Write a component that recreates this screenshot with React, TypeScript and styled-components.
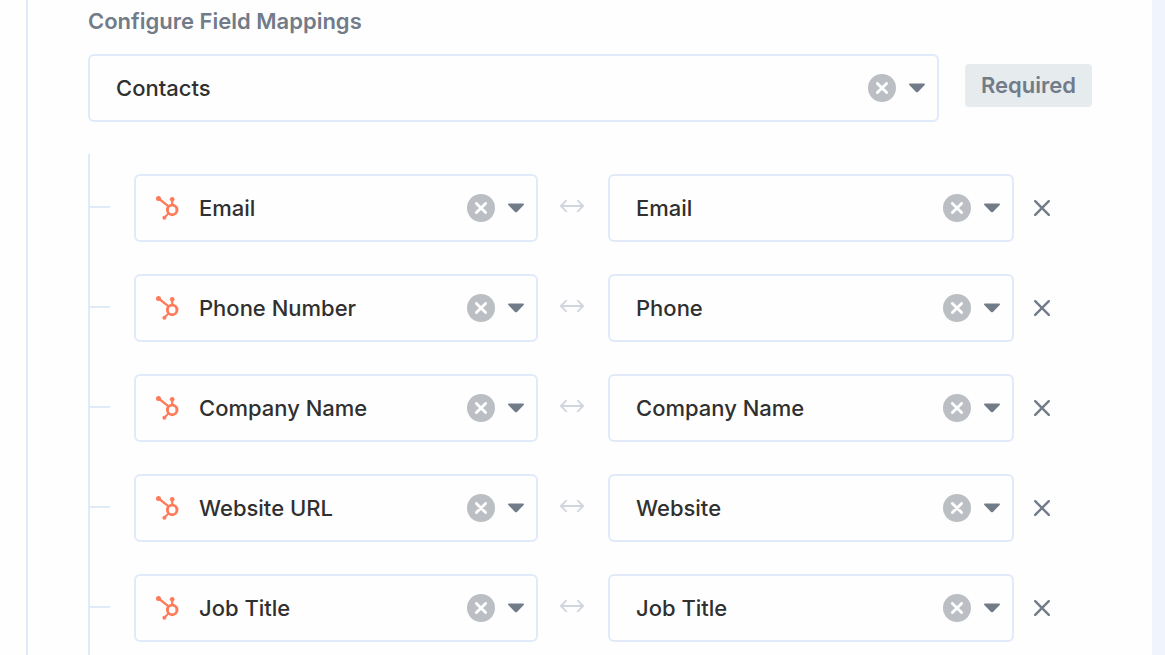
import React, { useState } from "react";
import styled, { createGlobalStyle } from "styled-components";

const line = "#e0eaf9";
const slate = "#727b88";

const GlobalStyle = createGlobalStyle`
  *, *::before, *::after { box-sizing: border-box; }
  body {
    margin: 0;
    background: #f0f4fd;
    color: #303030;
    font-family: Inter, "Liberation Sans", sans-serif;
    font-size: 22px;
    line-height: 28px;
  }
`;

const Page = styled.main`
  display: flex;
  min-height: 100vh;
  margin-right: 13px;
  padding-left: 26px;
  background: #fefefe;
`;

const Section = styled.section`
  display: flex;
  flex: 1;
  flex-direction: column;
  min-width: 0;
  padding: 8px 60px 0;
  border-left: 2px solid ${line};
`;

const Title = styled.h2`
  margin: 0 0 20px;
  color: ${slate};
  font-size: 22px;
  font-weight: 600;
  line-height: 26px;
`;

const ObjectRow = styled.div`
  display: flex;
  align-items: flex-start;
  gap: 26px;
  margin-bottom: 32px;
`;

const Badge = styled.span`
  margin-top: 10px;
  padding: 8px 16px;
  border-radius: 4px;
  background: #e6ebee;
  color: ${slate};
  font-weight: 600;
  line-height: 27px;
`;

const Tree = styled.ul`
  display: flex;
  flex: 1;
  flex-direction: column;
  gap: 32px;
  margin: 0;
  padding: 20px 0 0;
  border-left: 2px solid ${line};
  list-style: none;
`;

const MappingRow = styled.li`
  display: grid;
  grid-template-columns: 44px 202fr 70px 203fr 78px;
  align-items: center;

  &::before {
    content: "";
    width: 20px;
    height: 4px;
    border-top: 2px solid ${line};
  }
`;

const FieldBox = styled.div<{ $hasLogo?: boolean }>`
  display: flex;
  flex: 1;
  align-items: center;
  min-width: 0;
  height: 68px;
  padding: 0 12px 0 ${(p) => (p.$hasLogo ? 19 : 26)}px;
  border: 2px solid ${line};
  border-radius: 6px;
  background: #fefefe;
`;

const Picker = styled.select`
  flex: 1;
  min-width: 0;
  height: 100%;
  padding: 0;
  border: 0;
  outline: 0;
  appearance: none;
  background: transparent;
  color: inherit;
  font: inherit;
  font-weight: 500;
  cursor: pointer;
`;

const IconButton = styled.button`
  display: grid;
  place-items: center;
  width: 28px;
  height: 28px;
  padding: 0;
  border: 0;
  border-radius: 50%;
  background: transparent;
  color: ${slate};
  cursor: pointer;
`;

const ClearButton = styled(IconButton)`
  flex: none;
  margin-right: 13px;
  background: #bbbfc4;
  color: #fff;
`;

const RemoveButton = styled(IconButton)`
  margin-left: 14px;
`;

const Logo = styled.svg`
  flex: none;
  margin-right: 20px;
`;

const Caret = styled.svg`
  flex: none;
  pointer-events: none;
`;

const SyncArrow = styled.div`
  display: grid;
  justify-items: center;
  padding: 0 2px 4px 0;
`;

function HubSpotLogo() {
  return (
    <Logo width="24" height="24" viewBox="0 0 24 24" fill="none" stroke="#ff7a59" aria-hidden="true">
      <circle cx="17.2" cy="13.9" r="4.8" strokeWidth="2.9" />
      <path d="M17.2 9.5V3.2" strokeWidth="2.2" />
      <path d="M3.6 2.5 13.6 10.3" strokeWidth="2.3" />
      <path d="M13.6 17.4 9.5 21.5" strokeWidth="2" />
      <g fill="#ff7a59" stroke="none">
        <circle cx="3.5" cy="2.5" r="2.5" />
        <circle cx="17.2" cy="3.2" r="2.3" />
        <circle cx="9.4" cy="21.7" r="2" />
      </g>
    </Logo>
  );
}

function Cross({ size, weight }: { size: number; weight: number }) {
  const a = weight / 2;
  const b = size - a;
  return (
    <svg width={size} height={size} viewBox={`0 0 ${size} ${size}`} fill="none" stroke="currentColor" strokeWidth={weight} strokeLinecap="round" aria-hidden="true">
      <path d={`M${a} ${a} ${b} ${b}M${b} ${a} ${a} ${b}`} />
    </svg>
  );
}

interface FieldProps {
  label: string;
  initial: string;
  options: string[];
  hasLogo?: boolean;
}

function Field({ label, initial, options, hasLogo }: FieldProps) {
  const [value, setValue] = useState(initial);
  return (
    <FieldBox $hasLogo={hasLogo}>
      {hasLogo && <HubSpotLogo />}
      <Picker aria-label={label} value={value} onChange={(e) => setValue(e.target.value)}>
        <option value="" />
        {options.map((o) => (
          <option key={o} value={o}>{o}</option>
        ))}
      </Picker>
      <ClearButton type="button" aria-label={`Clear ${label}`} onClick={() => setValue("")}>
        <Cross size={12} weight={2.8} />
      </ClearButton>
      <Caret width="16" height="10" viewBox="0 0 16 10" fill={slate} aria-hidden="true">
        <path d="M.9.5h14.2c.8 0 1.1.9.6 1.4L9 8.9c-.6.6-1.4.6-2 0L.3 1.9C-.2 1.4.1.5.9.5Z" />
      </Caret>
    </FieldBox>
  );
}

const initialMappings = [
  { source: "Email", target: "Email" },
  { source: "Phone Number", target: "Phone" },
  { source: "Company Name", target: "Company Name" },
  { source: "Website URL", target: "Website" },
  { source: "Job Title", target: "Job Title" },
];

const sources = initialMappings.map((m) => m.source);
const targets = initialMappings.map((m) => m.target);

export default function App() {
  const [mappings, setMappings] = useState(initialMappings);
  return (
    <>
      <GlobalStyle />
      <Page>
        <Section>
          <Title>Configure Field Mappings</Title>
          <ObjectRow>
            <Field label="Object" initial="Contacts" options={["Contacts"]} />
            <Badge>Required</Badge>
          </ObjectRow>
          <Tree>
            {mappings.map((m) => (
              <MappingRow key={m.source}>
                <Field label="HubSpot field" initial={m.source} options={sources} hasLogo />
                <SyncArrow>
                  <svg width="24" height="14" viewBox="0 0 24 14" fill="none" stroke="#d0d5df" strokeWidth="1.8" strokeLinecap="round" strokeLinejoin="round" aria-hidden="true">
                    <path d="M1 7h22M6.2 1.6.9 7l5.3 5.4M17.8 1.6 23.1 7l-5.3 5.4" />
                  </svg>
                </SyncArrow>
                <Field label="Mapped field" initial={m.target} options={targets} />
                <RemoveButton
                  type="button"
                  aria-label={`Remove ${m.source} mapping`}
                  onClick={() => setMappings(mappings.filter((x) => x !== m))}
                >
                  <Cross size={16} weight={2.4} />
                </RemoveButton>
              </MappingRow>
            ))}
          </Tree>
        </Section>
      </Page>
    </>
  );
}
